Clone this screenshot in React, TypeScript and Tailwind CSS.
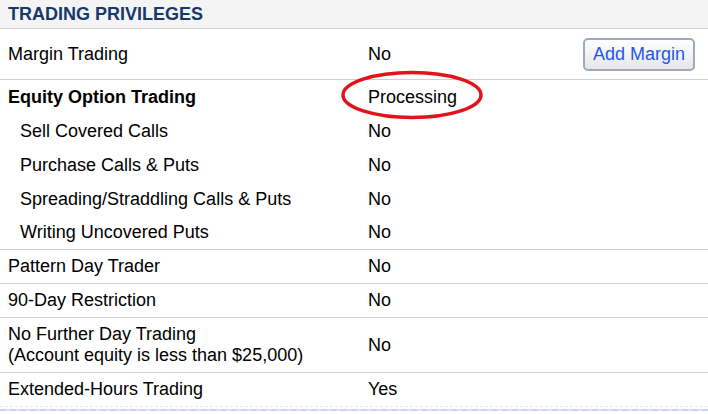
const subRows = [
  ['Sell Covered Calls', 'No'],
  ['Purchase Calls & Puts', 'No'],
  ['Spreading/Straddling Calls & Puts', 'No'],
  ['Writing Uncovered Puts', 'No']
];

const Row = ({ label, value, className = '' }: { label: React.ReactNode; value: string; className?: string }) => (
  <div className={`flex items-center border-b border-[#cfcfcf] ${className}`}>
    <div className="w-[368px] pl-2">{label}</div>
    <div>{value}</div>
  </div>
);

const App = () => (
  <div className="relative w-[708px] h-[414px] overflow-hidden bg-white text-[18px] text-black font-['Liberation_Sans',Arial,sans-serif]">
    <div className="flex h-[29px] items-center border-b border-[#cfcfcf] bg-[#f4f4f4] px-2">
      <h2 className="text-[18px] font-bold text-[#17386a]">TRADING PRIVILEGES</h2>
    </div>

    <div className="flex h-[51px] items-center border-b border-[#cfcfcf]">
      <div className="w-[368px] pl-2">Margin Trading</div>
      <div>No</div>
      <button className="ml-auto mr-[13px] h-[33px] w-[112px] rounded-[5px] border-2 border-[#9ea9ba] bg-gradient-to-b from-white to-[#e4e6ea] text-[18px] text-[#2457e6]">
        Add Margin
      </button>
    </div>

    <div className="border-b border-[#cfcfcf]">
      <div className="flex h-[34px] items-center">
        <div className="w-[368px] pl-2 font-bold">Equity Option Trading</div>
        <div>Processing</div>
      </div>
      {subRows.map(([label, value], i) => (
        <div key={label} className={`flex items-center ${i === subRows.length - 1 ? 'h-[33px]' : 'h-[34px]'}`}>
          <div className="w-[368px] pl-5">{label}</div>
          <div>{value}</div>
        </div>
      ))}
    </div>

    <Row label="Pattern Day Trader" value="No" className="h-[34px]" />
    <Row label="90-Day Restriction" value="No" className="h-[34px]" />
    <Row
      label={
        <div className="leading-[21px]">
          No Further Day Trading
          <br />
          (Account equity is less than $25,000)
        </div>
      }
      value="No"
      className="h-[55px]"
    />
    <div className="flex h-[33px] items-center">
      <div className="w-[368px] pl-2">Extended-Hours Trading</div>
      <div>Yes</div>
    </div>
    <div className="border-t border-dashed border-[#e6ecf4] h-[3px]" />
    <div className="h-[2px] border-t-2 border-dashed border-[#c6d6ea] bg-[#d9e4f2]" />

    <svg className="absolute left-[339px] top-[69px]" width="148" height="54" viewBox="0 0 148 54">
      <ellipse cx="73" cy="26" rx="69" ry="22.5" fill="none" stroke="#e4131b" strokeWidth="3.5" />
    </svg>
  </div>
);

export default App;
